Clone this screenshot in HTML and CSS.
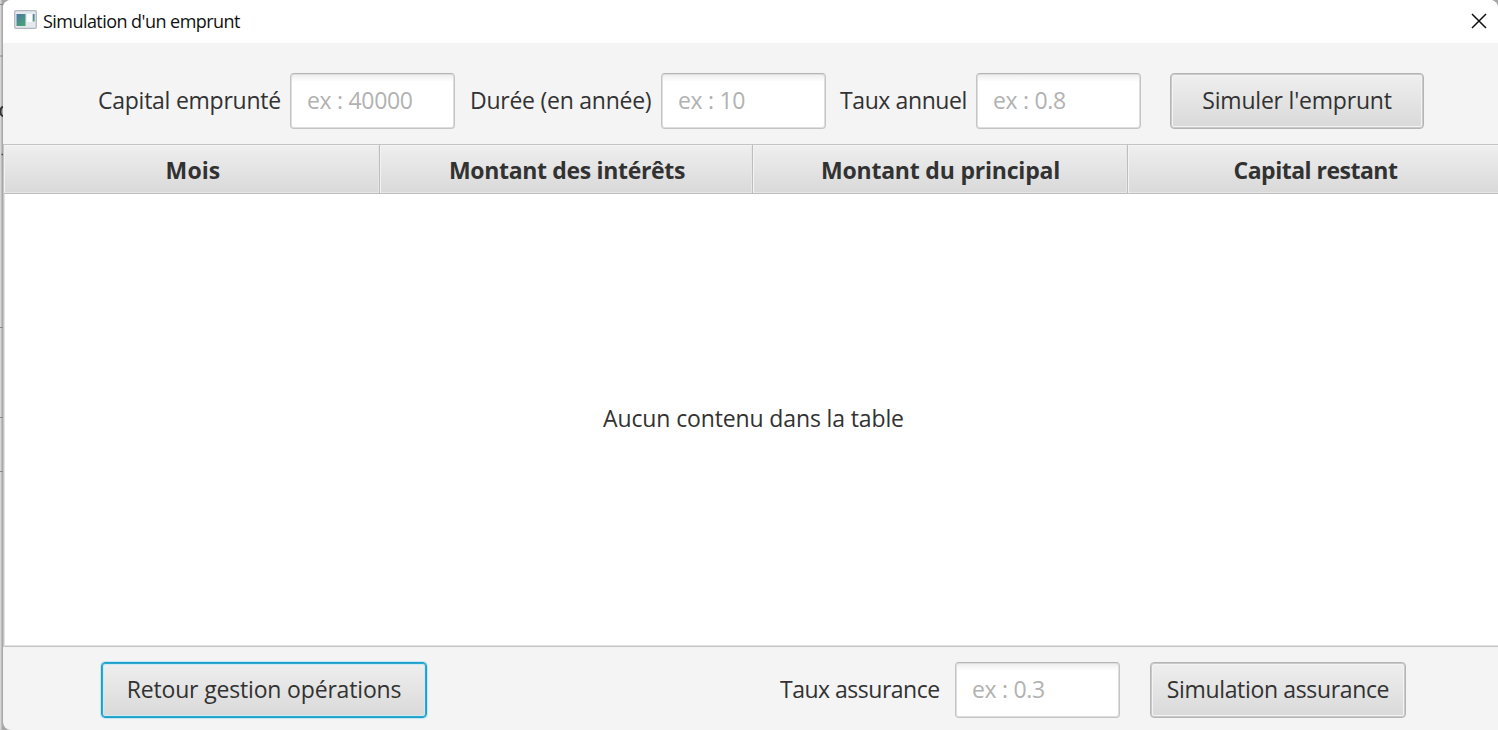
FILE: index.html
```html
<!DOCTYPE html>
<html lang="fr">
<head>
<meta charset="utf-8">
<title>Simulation d'un emprunt</title>
<link rel="stylesheet" href="styles.css">
</head>
<body>
<div class="desktop">
  <div class="behind">
    <svg width="5" height="730" viewBox="0 0 5 730">
      <path d="M0 4.5H3M0 56H3M0 327.5H3M0 417.5H3M0 471.500H3" stroke="#888" stroke-width="1"/>
      <path d="M3 107C0.500 107 0.500 109 0.500 111.500S1 116 3 116" fill="none" stroke="#333" stroke-width="2"/>
      <path d="M1.500 154.500h1.500" stroke="#444" stroke-width="1.500"/>
    </svg>
  </div>
  <div class="window">
    <header class="titlebar">
      <svg class="app-icon" width="24" height="20" viewBox="0 0 24 20">
        <defs><linearGradient id="g" x1="0" y1="0" x2="0.6" y2="1"><stop offset="0" stop-color="#4a78a8"/><stop offset="1" stop-color="#4ba076"/></linearGradient></defs>
        <rect x="0.700" y="0.700" width="21.600" height="17.600" rx="1" fill="#e4e9ee" stroke="#b4b8be" stroke-width="1.300"/>
        <rect x="2.500" y="4" width="9" height="12" fill="url(#g)"/>
        <rect x="13" y="4" width="5" height="8" fill="#fafcfd"/>
        <rect x="18.800" y="4" width="1.800" height="7.500" fill="url(#g)"/>
      </svg>
      <span class="title">Simulation d'un emprunt</span>
      <svg class="close" width="16" height="16" viewBox="0 0 16 16"><path d="M1 1L15 15M15 1L1 15" stroke="#111" stroke-width="1.500"/></svg>
    </header>
    <section class="form">
      <label class="label capital">Capital emprunté</label>
      <div class="field">ex : 40000</div>
      <label class="label duree">Durée (en année)</label>
      <div class="field">ex : 10</div>
      <label class="label taux">Taux annuel</label>
      <div class="field">ex : 0.8</div>
      <div class="button simuler"><span>Simuler l'emprunt</span></div>
    </section>
    <section class="table">
      <div class="head">
        <div class="col mois"><span>Mois</span></div>
        <div class="col interets"><span>Montant des intérêts</span></div>
        <div class="col principal"><span>Montant du principal</span></div>
        <div class="col restant"><span>Capital restant</span></div>
      </div>
      <div class="empty"><span>Aucun contenu dans la table</span></div>
    </section>
    <footer class="footer">
      <div class="button retour"><span>Retour gestion opérations</span></div>
      <label class="label assurance">Taux assurance</label>
      <div class="field">ex : 0.3</div>
      <div class="button simass"><span>Simulation assurance</span></div>
    </footer>
  </div>
</div>
</body>
</html>
```
FILE: styles.css
```css
* { box-sizing: border-box; }
body { margin: 0; overflow: hidden; font-family: "Open Sans", "Noto Sans", sans-serif; font-size: 23px; color: #323232; letter-spacing: -0.2px; }
.desktop { width: 1498px; height: 730px; display: flex; background: #a6a6a6; overflow: hidden; }
.behind { width: 3px; flex: none; height: 730px; background: linear-gradient(90deg, #dcdcdc 0, #cfcfcf 1px, #ababab 2px, #a4a4a4 3px); overflow: hidden; }
.window { width: 1495px; height: 730px; background: #f4f4f4; border-radius: 8px 8px 0 8px; overflow: hidden; display: flex; flex-direction: column; }
.titlebar { height: 43px; flex: none; background: #fff; display: flex; padding-left: 11px; font-size: 18px; line-height: 24px; letter-spacing: -0.55px; color: #111; }
.app-icon { margin-top: 10px; flex: none; }
.title { margin: 9px 0 0 5px; white-space: nowrap; }
.close { margin: 13px 11.5px 0 auto; }
.form { height: 101px; flex: none; display: flex; padding: 30px 0 0 95px; }
.label { height: 56px; line-height: 55px; white-space: nowrap; flex: none; }
.capital { width: 192px; letter-spacing: -0.25px; }
.duree { width: 191px; margin-left: 15px; letter-spacing: -0.25px; }
.taux { width: 136px; margin-left: 14px; letter-spacing: -0.4px; }
.field { width: 165px; height: 56px; flex: none; border: 1px solid #c4c4c4; border-top-color: #b5b5b5; border-radius: 4px; background: linear-gradient(#ededed, #fff 8px); box-shadow: inset 0 0 0 1px #dedede; color: #b2b2b2; line-height: 53px; padding-left: 16px; letter-spacing: -0.3px; white-space: nowrap; }
.button { height: 56px; flex: none; border: 1px solid #b5b5b5; border-radius: 4px; background: linear-gradient(#efefef, #d9d9d9); box-shadow: inset 0 0 0 1px #c9c9c9, inset 0 0 0 2px #f3f3f3; line-height: 53px; display: flex; justify-content: center; white-space: nowrap; }
.simuler { width: 254px; margin-left: 29px; }
.table { height: 503px; flex: none; border: 1px solid #c4c4c4; border-width: 1px 0 1px 1px; box-shadow: inset 1px -1px 0 #e2e2e2; background: #fff; }
.head { height: 49px; display: grid; grid-template-columns: 376px 373px 375px 376px; grid-template-rows: 48px; border-bottom: 1px solid #bebebe; font-weight: 700; }
.col { border-right: 1px solid #bdbdbd; background: linear-gradient(#efefef, #d9d9d9); box-shadow: inset 1px 1px 0 #f3f3f3, inset -1px -1px 0 #e6e6e6; display: flex; justify-content: center; line-height: 50px; white-space: nowrap; }
.mois { padding-left: 3px; letter-spacing: 0.1px; }
.interets { padding-left: 2px; letter-spacing: -0.33px; }
.principal { padding-left: 1px; }
.restant { letter-spacing: -0.5px; }
.empty { height: 450px; display: flex; justify-content: center; padding-left: 5px; line-height: 448px; letter-spacing: -0.13px; }
.footer { flex: 1; display: flex; padding: 15px 0 0 98px; }
.retour { width: 326px; letter-spacing: -0.17px; border-color: #1c9fc8; box-shadow: 0 0 0 1px #c6e8f3, inset 0 0 0 1px #30a7cd, inset 0 0 0 2px #cdeaf3; }
.assurance { width: 175px; margin-left: 353px; letter-spacing: -0.5px; }
.simass { width: 256px; margin-left: 30px; letter-spacing: -0.35px; }
```
